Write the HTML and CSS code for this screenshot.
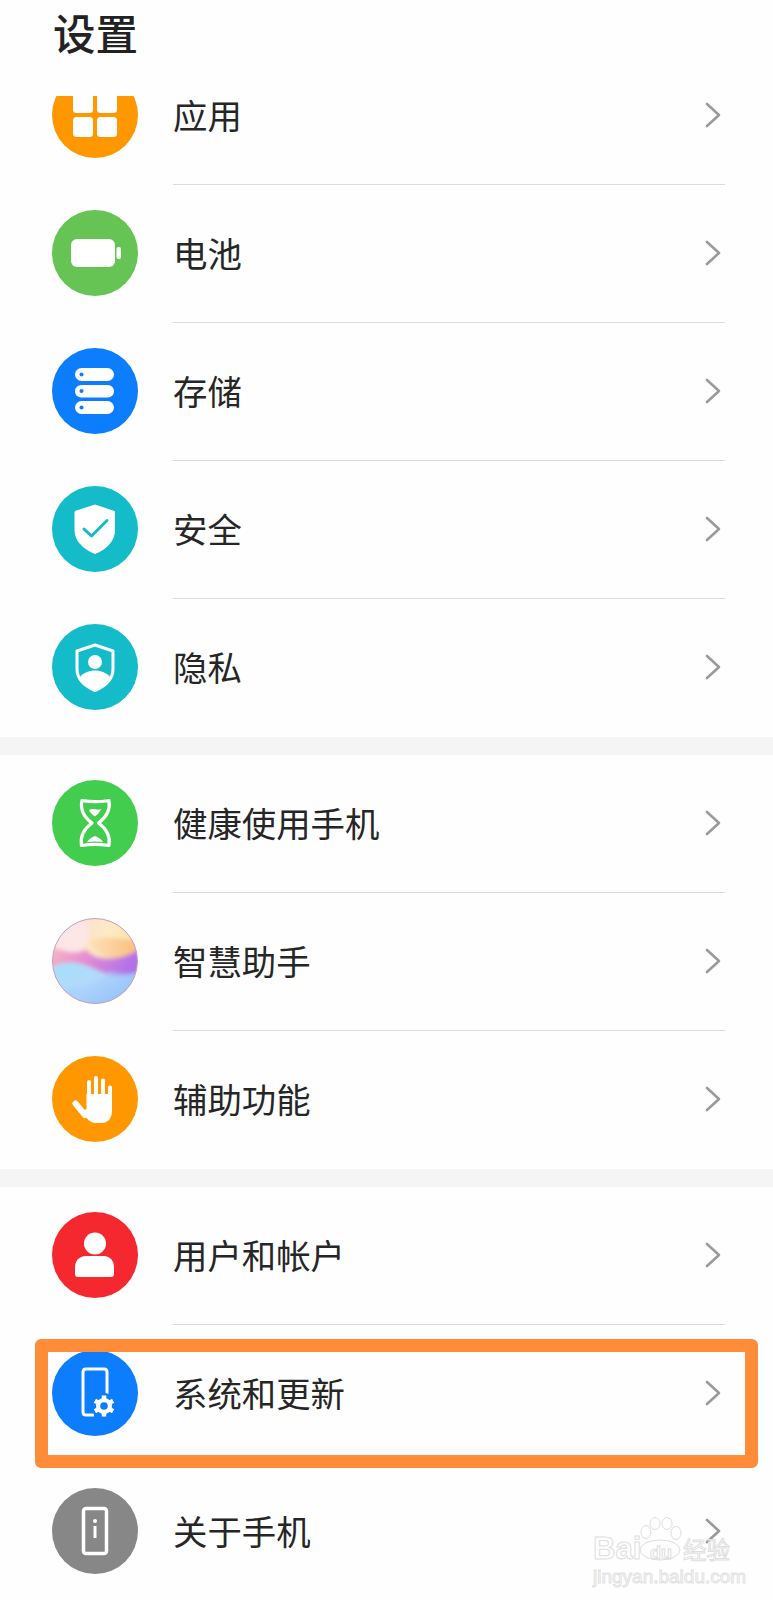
FILE: index.html
```html
<!DOCTYPE html>
<html lang="zh-CN">
<head>
<meta charset="utf-8">
<title>设置</title>
<link rel="stylesheet" href="styles.css">
</head>
<body>
<div class="page">
  <header class="header"><h1 class="title">设置</h1></header>
  <main class="scroller">
    <section class="group group-first">
      <div class="row">
        <svg class="icon" viewBox="0 0 86 86"><circle cx="43" cy="43" r="43" fill="#ff9800"/><rect x="21" y="21" width="20" height="20" rx="3.5" fill="#fff"/><rect x="45" y="21" width="20" height="20" rx="3.5" fill="#fff"/><rect x="21" y="45" width="20" height="20" rx="3.5" fill="#fff"/><rect x="45" y="45" width="20" height="20" rx="3.5" fill="#fff"/></svg>
        <div class="body"><span class="label">应用</span><svg class="chevron" viewBox="0 0 16 26"><path d="M2 2l12 11L2 24"/></svg></div>
      </div>
      <div class="row">
        <svg class="icon" viewBox="0 0 86 86"><circle cx="43" cy="43" r="43" fill="#66c455"/><rect x="19" y="29" width="44" height="28" rx="6" fill="#fff"/><rect x="64.500" y="37" width="4.500" height="12" rx="2" fill="#fff"/></svg>
        <div class="body"><span class="label">电池</span><svg class="chevron" viewBox="0 0 16 26"><path d="M2 2l12 11L2 24"/></svg></div>
      </div>
      <div class="row">
        <svg class="icon" viewBox="0 0 86 86"><circle cx="43" cy="43" r="43" fill="#0b7dfd"/><g fill="#fff"><rect x="23" y="20" width="39" height="13" rx="6.500"/><rect x="23" y="37" width="39" height="12.500" rx="6.250"/><rect x="23" y="53" width="39" height="13" rx="6.500"/></g><g fill="#0b7dfd"><circle cx="29.500" cy="26.500" r="2"/><circle cx="29.500" cy="43" r="2"/><circle cx="29.500" cy="59.500" r="2"/></g></svg>
        <div class="body"><span class="label">存储</span><svg class="chevron" viewBox="0 0 16 26"><path d="M2 2l12 11L2 24"/></svg></div>
      </div>
      <div class="row">
        <svg class="icon" viewBox="0 0 86 86"><circle cx="43" cy="43" r="43" fill="#14bbc8"/><path d="M43 19l19.500 6.500V44c0 11-8 19-19.500 23.500C31.500 63 23 55 23 44V25.500z" fill="#fff" stroke="#fff" stroke-width="1" stroke-linejoin="round"/><path d="M32 43l7.500 7L55 34.500" fill="none" stroke="#14bbc8" stroke-width="3" stroke-linecap="round" stroke-linejoin="round"/></svg>
        <div class="body"><span class="label">安全</span><svg class="chevron" viewBox="0 0 16 26"><path d="M2 2l12 11L2 24"/></svg></div>
      </div>
      <div class="row row-last">
        <svg class="icon" viewBox="0 0 86 86"><circle cx="43" cy="43" r="43" fill="#14bbc8"/><path d="M43 21l18 6V45c0 10-7.500 17-18 21.500C32.500 62 25 55 25 45V27z" fill="none" stroke="#fff" stroke-width="3" stroke-linejoin="round"/><circle cx="43" cy="38" r="7" fill="#fff"/><path d="M28 53c3-4 9-6.500 15-6.500S55 49 58 53c-3 6-8 10-15 13.500C36 63 31 59 28 53z" fill="#fff"/></svg>
        <div class="body"><span class="label">隐私</span><svg class="chevron" viewBox="0 0 16 26"><path d="M2 2l12 11L2 24"/></svg></div>
      </div>
    </section>
    <section class="group">
      <div class="row">
        <svg class="icon" viewBox="0 0 86 86"><circle cx="43" cy="43" r="43" fill="#43cd4f"/><path d="M30 20.500c8 1.500 18 1.500 27 0 1.500 9-3 17-10.500 22.500 7.500 5.500 12 13.500 10.500 22.500-9-1.500-19-1.500-27.500 0C28 56.500 32.500 48.500 40 43 32.500 37.500 28 29.500 30 20.500z" fill="none" stroke="#fff" stroke-width="3.200" stroke-linejoin="round"/><path d="M37 30c4-2.500 8 1 12-1-1 3-3 5-6 7.500-3-2-5-4-6-6.500zM35 62c2-3 5-5 8-6 3 1 6 3 8 6-5-.8-11-.8-16 0z" fill="#fff"/></svg>
        <div class="body"><span class="label">健康使用手机</span><svg class="chevron" viewBox="0 0 16 26"><path d="M2 2l12 11L2 24"/></svg></div>
      </div>
      <div class="row">
        <svg class="icon" viewBox="0 0 86 86">
          <defs>
            <clipPath id="ball"><circle cx="43" cy="43" r="42.500"/></clipPath>
            <linearGradient id="ballTop" x1="0" y1="0" x2="1" y2="0.500"><stop offset="0" stop-color="#fbd6d8"/><stop offset="0.600" stop-color="#fdeac4"/><stop offset="1" stop-color="#fddc96"/></linearGradient>
            <linearGradient id="ballOrange" x1="0" y1="0" x2="1" y2="0"><stop offset="0" stop-color="#fde2bc"/><stop offset="1" stop-color="#fbbc76"/></linearGradient>
            <linearGradient id="ballMid" x1="0" y1="0" x2="1" y2="0.200"><stop offset="0" stop-color="#f9b8c2"/><stop offset="0.450" stop-color="#e58ed2"/><stop offset="1" stop-color="#ae6fe8"/></linearGradient>
            <linearGradient id="ballLow" x1="0" y1="0" x2="1" y2="0.800"><stop offset="0" stop-color="#a3e2fb"/><stop offset="0.550" stop-color="#b6d7fc"/><stop offset="1" stop-color="#7cb2f8"/></linearGradient>
            <filter id="soft" x="-10%" y="-10%" width="120%" height="120%"><feGaussianBlur stdDeviation="2"/></filter>
          </defs>
          <g clip-path="url(#ball)">
            <g filter="url(#soft)">
              <rect x="-4" y="-4" width="94" height="94" fill="url(#ballTop)"/>
              <circle cx="18" cy="16" r="19" fill="#fde6e6"/>
              <path d="M36 22c12-4 34-2 52 2v8C70 44 44 44 36 22z" fill="url(#ballOrange)"/>
              <path d="M-4 32c10-4 16 2 24 2 14 1 12-6 18 1 10 8 34 8 50-5v32H-4z" fill="url(#ballMid)"/>
              <path d="M-4 52c14-10 30-8 42-3 16 8 32 12 50 5v36H-4z" fill="url(#ballLow)"/>
              <path d="M14 70c20 0 34-6 44-18 10 4 20 4 30 2v36H10z" fill="#9fcdfb" opacity=".45"/>
            </g>
          </g>
          <circle cx="43" cy="43" r="42.500" fill="none" stroke="#c89ac0" stroke-width="1"/>
        </svg>
        <div class="body"><span class="label">智慧助手</span><svg class="chevron" viewBox="0 0 16 26"><path d="M2 2l12 11L2 24"/></svg></div>
      </div>
      <div class="row row-last">
        <svg class="icon" viewBox="0 0 86 86"><circle cx="43" cy="43" r="43" fill="#ff9800"/><g fill="none" stroke="#fff" stroke-linecap="round"><path d="M37 40V26M44 38V22M51 40V24.500M58 46V31.500" stroke-width="4"/><path d="M23.500 47.500L33 59" stroke-width="6"/></g><path d="M34.500 38h25.500v17c0 7-4 12-10 12H44c-5 0-8-3-11-7l-3-4 4.500-3z" fill="#fff"/></svg>
        <div class="body"><span class="label">辅助功能</span><svg class="chevron" viewBox="0 0 16 26"><path d="M2 2l12 11L2 24"/></svg></div>
      </div>
    </section>
    <section class="group">
      <div class="row">
        <svg class="icon" viewBox="0 0 86 86"><circle cx="43" cy="43" r="43" fill="#f5282f"/><circle cx="43" cy="31.500" r="11" fill="#fff"/><path d="M34 44h18c6 0 10 5 10 11v7c0 2-1 3-3 3H26c-2 0-3-1-3-3v-7c0-6 4-11 11-11z" fill="#fff"/></svg>
        <div class="body"><span class="label">用户和帐户</span><svg class="chevron" viewBox="0 0 16 26"><path d="M2 2l12 11L2 24"/></svg></div>
      </div>
      <div class="row">
        <svg class="icon" viewBox="0 0 86 86"><circle cx="43" cy="43" r="43" fill="#0b7dfd"/><path d="M42 65H34c-2 0-3-1-3-3V22c0-2 1-3 3-3h18c2 0 3 1 3 3v22" fill="none" stroke="#fff" stroke-width="3"/><circle cx="52" cy="56" r="13" fill="#0b7dfd"/><g stroke="#fff" stroke-width="4.500"><path d="M52 45.500v21M42.900 50.750l18.200 10.500M42.900 61.250l18.200-10.500"/></g><circle cx="52" cy="56" r="8" fill="#fff"/><circle cx="52" cy="56" r="3.800" fill="#0b7dfd"/></svg>
        <div class="body"><span class="label">系统和更新</span><svg class="chevron" viewBox="0 0 16 26"><path d="M2 2l12 11L2 24"/></svg></div>
      </div>
      <div class="row row-last">
        <svg class="icon" viewBox="0 0 86 86"><circle cx="43" cy="43" r="43" fill="#878787"/><rect x="31.500" y="20.500" width="23" height="45" rx="2.500" fill="none" stroke="#fff" stroke-width="3.500"/><circle cx="43" cy="33" r="2" fill="#fff"/><rect x="41.500" y="38" width="3" height="12" fill="#fff"/></svg>
        <div class="body"><span class="label">关于手机</span><svg class="chevron" viewBox="0 0 16 26"><path d="M2 2l12 11L2 24"/></svg></div>
      </div>
    </section>
  </main>
  <div class="highlight"></div>
  <div class="watermark">
    <svg class="paw" viewBox="0 0 44 44"><g fill="none" stroke="#dedede" stroke-width="1"><ellipse cx="7" cy="15" rx="5" ry="6.500"/><ellipse cx="16" cy="6.500" rx="5" ry="6"/><ellipse cx="28" cy="6.500" rx="5" ry="6"/><ellipse cx="37" cy="16" rx="5" ry="6.500"/><ellipse cx="21" cy="33" rx="20" ry="10"/></g></svg>
    <div class="wm-line"><span class="wm-bai">Bai</span><span class="wm-du">du</span><span class="wm-cn">经验</span></div>
    <div class="wm-url">jingyan.baidu.com</div>
  </div>
</div>
</body>
</html>
```

FILE: styles.css
```css
* { box-sizing: border-box; }
html, body { margin: 0; padding: 0; }
body {
  background: #fefefe;
  font-family: "Noto Sans CJK SC", "Noto Sans", sans-serif;
  color: #222;
}
.page {
  position: relative;
  width: 773px;
  height: 1600px;
  overflow: hidden;
  display: flex;
  flex-direction: column;
}
.header {
  flex: none;
  height: 96px;
  padding-left: 53px;
  background: #fefefe;
  position: relative;
  z-index: 1;
}
.title {
  margin: 0;
  font-size: 42.5px;
  font-weight: 500;
  line-height: 64px;
  color: #222;
}
.scroller {
  flex: 1;
  min-height: 0;
  overflow: hidden;
  background: #f5f5f5;
}
.group {
  display: flex;
  flex-direction: column;
  background: #fefefe;
}
.group + .group { margin-top: 18px; }
.group-first { margin-top: -49px; }
.row {
  height: 138px;
  display: flex;
  align-items: center;
  padding-left: 52px;
}
.icon {
  flex: none;
  width: 86px;
  height: 86px;
  margin-bottom: 2px;
  display: block;
}
.body {
  flex: 1;
  height: 100%;
  margin-left: 35px;
  margin-right: 48px;
  border-bottom: 1px solid #dcdcdc;
  padding: 0 4px 1px 0;
  display: flex;
  align-items: center;
  justify-content: space-between;
}
.row-last .body { border-bottom: 0; padding-bottom: 2px; }
.label {
  font-size: 34.4px;
  line-height: 36px;
  margin-bottom: 2px;
  color: #262626;
}
.chevron {
  flex: none;
  width: 16px;
  height: 26px;
  display: block;
}
.chevron path {
  fill: none;
  stroke: #9a9a9a;
  stroke-width: 2.600;
  stroke-linecap: round;
  stroke-linejoin: round;
}
.highlight {
  position: absolute;
  left: 35px;
  top: 1339px;
  width: 723px;
  height: 129px;
  border: 13px solid #ff8c38;
  border-radius: 6px;
}
.watermark {
  position: absolute;
  left: 593px;
  top: 1517px;
  width: 140px;
  height: 70px;
  color: transparent;
  font-family: "Liberation Sans", sans-serif;
}
.paw {
  position: absolute;
  left: 46px;
  top: 0;
  width: 44px;
  height: 44px;
}
.wm-line {
  position: absolute;
  left: 0;
  top: 18px;
  width: 140px;
  height: 28px;
  display: flex;
  align-items: baseline;
  white-space: nowrap;
}
.wm-bai {
  font-size: 31px;
  line-height: 28px;
  font-weight: 700;
  width: 51px;
  -webkit-text-stroke: 1px #dedede;
}
.wm-du {
  font-size: 18px;
  line-height: 20px;
  font-weight: 700;
  width: 39px;
  padding-left: 6px;
  -webkit-text-stroke: 1px #dedede;
}
.wm-cn {
  font-family: "Noto Sans CJK SC", sans-serif;
  font-size: 23.500px;
  line-height: 24px;
  -webkit-text-stroke: 1px #dedede;
}
.wm-url {
  position: absolute;
  left: 0;
  top: 50px;
  font-size: 19px;
  line-height: 20px;
  white-space: nowrap;
  -webkit-text-stroke: 1px #e2e2e2;
}
```
